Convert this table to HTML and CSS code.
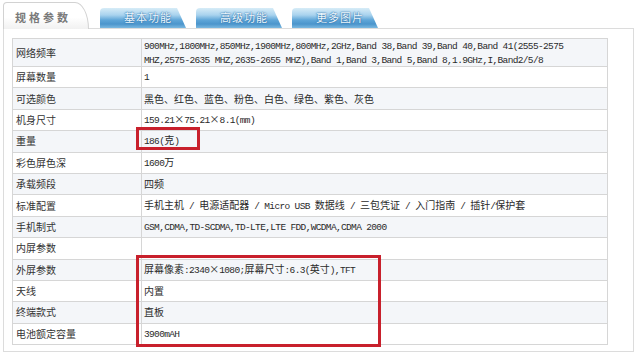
FILE: index.html
```html
<!DOCTYPE html>
<html lang="zh-CN">
<head>
<meta charset="utf-8">
<title>规格参数</title>
<link rel="stylesheet" href="styles.css">
</head>
<body>
<div class="page">
  <div class="tabs">
    <div class="tab active">规格参数</div>
    <div class="tab blue">基本功能</div>
    <div class="tab blue">高级功能</div>
    <div class="tab blue">更多图片</div>
  </div>
  <div class="panel">
    <table class="spec">
      <tr class="odd tall"><td class="k">网络频率</td><td class="v"><span class="e">900MHz,1800MHz,850MHz,1900MHz,800MHz,2GHz,Band 38,Band 39,Band 40,Band 41(2555-2575 MHZ,2575-2635 MHZ,2635-2655 MHZ),Band 1,Band 3,Band 5,Band 8,1.9GHz,I,Band2/5/8</span></td></tr>
      <tr><td class="k">屏幕数量</td><td class="v"><span class="e">1</span></td></tr>
      <tr class="odd"><td class="k">可选颜色</td><td class="v">黑色、红色、蓝色、粉色、白色、绿色、紫色、灰色</td></tr>
      <tr><td class="k">机身尺寸</td><td class="v"><span class="e">159.21</span>×<span class="e">75.21</span>×<span class="e">8.1(mm)</span></td></tr>
      <tr class="odd"><td class="k">重量</td><td class="v"><span class="e">186(</span>克<span class="e">)</span></td></tr>
      <tr><td class="k">彩色屏色深</td><td class="v"><span class="e">1600</span>万</td></tr>
      <tr class="odd"><td class="k">承载频段</td><td class="v">四频</td></tr>
      <tr><td class="k">标准配置</td><td class="v">手机主机<span class="e"> / </span>电源适配器<span class="e"> / Micro USB </span>数据线<span class="e"> / </span>三包凭证<span class="e"> / </span>入门指南<span class="e"> / </span>插针<span class="e">/</span>保护套</td></tr>
      <tr class="odd"><td class="k">手机制式</td><td class="v"><span class="e">GSM,CDMA,TD-SCDMA,TD-LTE,LTE FDD,WCDMA,CDMA 2000</span></td></tr>
      <tr><td class="k">内屏参数</td><td class="v"></td></tr>
      <tr class="odd"><td class="k">外屏参数</td><td class="v">屏幕像素<span class="e">:2340</span>×<span class="e">1080;</span>屏幕尺寸<span class="e">:6.3(</span>英寸<span class="e">),TFT</span></td></tr>
      <tr><td class="k">天线</td><td class="v">内置</td></tr>
      <tr class="odd"><td class="k">终端款式</td><td class="v">直板</td></tr>
      <tr><td class="k">电池额定容量</td><td class="v"><span class="e">3900mAH</span></td></tr>
    </table>
  </div>
  <div class="mark mark-weight"></div>
  <div class="mark mark-screen"></div>
</div>
</body>
</html>
```
FILE: styles.css
```css
html, body {
  margin: 0;
  padding: 0;
  background: #ffffff;
}
.page {
  position: relative;
  width: 640px;
  height: 355px;
  font-family: "Noto Sans CJK SC", "Liberation Sans", sans-serif;
  color: #333333;
}
.tabs {
  display: flex;
  align-items: flex-end;
  height: 28px;
  padding-left: 3px;
  gap: 10px;
}
.tab {
  box-sizing: border-box;
  font-size: 11px;
  line-height: 1;
}
.tab.active {
  position: relative;
  z-index: 1;
  width: 86px;
  height: 27px;
  margin-bottom: -1px;
  margin-right: 1px;
  padding: 9px 0 0 11px;
  border: 1px solid #d2d2d2;
  border-bottom: none;
  border-top-left-radius: 4px;
  border-top-right-radius: 14px 27px;
  background: linear-gradient(#ffffff, #ffffff 55%, #f1f1f1);
  color: #7a7a7a;
  font-weight: bold;
  letter-spacing: 3px;
}
.tab.blue {
  width: 86px;
  height: 20px;
  padding-top: 4px;
  padding-left: 24px;
  border-top-left-radius: 4px;
  clip-path: polygon(0 0, calc(100% - 9px) 0, 100% 100%, 0 100%);
  background: linear-gradient(#d7ecf7 0%, #a9d3ee 35%, #5fa6d8 60%, #4b95cc 80%, #7ab8e0 100%);
  color: #eef7fd;
  letter-spacing: 1px;
  text-shadow: 0 0 2px #2a6fa8, 0 0 1px #2a6fa8;
}
.panel {
  box-sizing: border-box;
  width: 631px;
  height: 324px;
  margin-left: 3px;
  padding: 9px 0 0 8px;
  border: 1px solid #dcdcdc;
}
.spec {
  width: 596px;
  border-collapse: collapse;
  table-layout: fixed;
}
.spec td {
  border: 1px solid #d6d6d6;
  height: 20.4px;
  padding: 0;
  font-size: 10px;
  line-height: 12px;
  vertical-align: middle;
  white-space: normal;
}
.spec tr.tall td {
  height: 26px;
  line-height: 11.5px;
}
.spec tr.odd td {
  background: #f4f6f9;
}
.spec td.k {
  width: 125px;
  padding-left: 3px;
  color: #333333;
}
.spec td.v {
  padding-left: 2px;
  color: #2a2a2a;
}
.e {
  font-family: "Liberation Mono", monospace;
  font-size: 9.5px;
  letter-spacing: -0.65px;
}
.mark {
  position: absolute;
  box-sizing: border-box;
  border: 3px solid #c8202c;
}
.mark-weight {
  left: 136px;
  top: 127px;
  width: 64px;
  height: 23px;
}
.mark-screen {
  left: 136px;
  top: 255px;
  width: 245px;
  height: 92px;
}
```
